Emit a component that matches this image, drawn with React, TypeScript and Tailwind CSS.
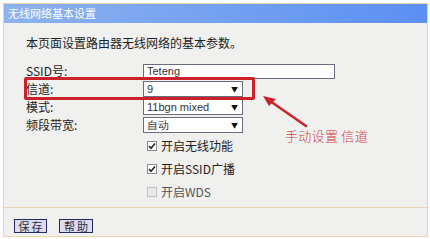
import React from 'react';

const font = { fontFamily: '"Noto Sans CJK SC", "Liberation Sans", sans-serif' };
const latin = { fontFamily: '"Liberation Sans", Arial, sans-serif' };

function Arrow() {
  return (
    <svg className="absolute left-0 top-0" width="430" height="239" viewBox="0 0 430 239">
      <line x1="306" y1="126" x2="270" y2="101" stroke="#c9232b" strokeWidth="2.6" strokeLinecap="round" />
      <polygon points="263,96 276,99 269,106" fill="#c9232b" />
    </svg>
  );
}

function SelectBox({ value }: { value: string }) {
  return (
    <div className="w-[100px] h-[16px] bg-white border border-[#6b6b80] flex items-center justify-between pl-[3px] pr-[4px]">
      <span className="text-[11px] leading-none text-[#333]" style={latin}>{value}</span>
      <span className="text-[7px] leading-none text-[#111]">▼</span>
    </div>
  );
}

function Check({ checked, disabled, label }: { checked?: boolean; disabled?: boolean; label: string }) {
  return (
    <div className="h-[23px] flex items-center pl-[121px]">
      <span
        className={`w-[10px] h-[10px] border flex items-center justify-center ${
          disabled ? 'border-[#c4c4c4] bg-[#e9e9e9]' : 'border-[#8c8c8c] bg-white'
        }`}
      >
        {checked && (
          <svg width="8" height="8" viewBox="0 0 8 8">
            <path d="M1 4 L3 6.2 L7 1.5" stroke="#222" strokeWidth="1.6" fill="none" />
          </svg>
        )}
      </span>
      <span className={`ml-[4px] text-[12px] leading-none ${disabled ? 'text-[#555]' : 'text-[#222]'}`}>{label}</span>
    </div>
  );
}

export default function App() {
  return (
    <div className="relative w-[430px] h-[239px] bg-white pl-[3px] pt-[3px] pr-[2px] pb-[2px]" style={font}>
      <div className="h-full border border-[#e6d5ae] bg-[#f0f0ee] flex flex-col">
        <div className="h-[19px] bg-gradient-to-r from-[#8db2ef] to-[#5c8ff3] flex items-center pl-[4px]">
          <span className="text-[11px] leading-none text-white">无线网络基本设置</span>
        </div>

        <div className="flex-1 pl-[22px]">
          <div className="mt-[12px] h-[16px] leading-[16px] text-[12px] text-[#222]">本页面设置路由器无线网络的基本参数。</div>

          <div className="mt-[11px] h-[18px] flex items-center">
            <span className="w-[117px] text-[12px] text-[#222]">SSID号:</span>
            <div className="w-[192px] h-[15px] bg-white border border-[#6b6b80] flex items-center pl-[3px]">
              <span className="text-[11px] leading-none text-[#333]" style={latin}>Teteng</span>
            </div>
          </div>
          <div className="h-[18px] flex items-center">
            <span className="w-[117px] text-[12px] text-[#222]">信道:</span>
            <SelectBox value="9" />
          </div>
          <div className="h-[18px] flex items-center">
            <span className="w-[117px] text-[12px] text-[#222]">模式:</span>
            <SelectBox value="11bgn mixed" />
          </div>
          <div className="h-[18px] flex items-center">
            <span className="w-[117px] text-[12px] text-[#222]">频段带宽:</span>
            <SelectBox value="自动" />
          </div>

          <Check checked label="开启无线功能" />
          <Check checked label="开启SSID广播" />
          <Check disabled label="开启WDS" />
        </div>

        <div className="border-t border-[#e6d5ae] h-[29px] flex items-start pt-[11px] pl-[10px] gap-[12px]">
          <button className="w-[33px] h-[14px] border-[1.5px] border-[#262660] bg-[#dcdcea] text-[11px] leading-none text-[#2a2a4a] tracking-[2px] pl-[2px] flex items-center justify-center">保存</button>
          <button className="w-[34px] h-[14px] border-[1.5px] border-[#262660] bg-[#dcdcea] text-[11px] leading-none text-[#2a2a4a] tracking-[2px] pl-[2px] flex items-center justify-center">帮助</button>
        </div>
      </div>

      <div className="absolute left-[24px] top-[77px] w-[231px] h-[23px] border-[3px] border-[#cc2229] rounded-[2px]" />
      <Arrow />
      <span className="absolute left-[285px] top-[129px] text-[13px] leading-none text-[#d03a3e] font-light tracking-[0.3px]">手动设置 信道</span>
    </div>
  );
}
